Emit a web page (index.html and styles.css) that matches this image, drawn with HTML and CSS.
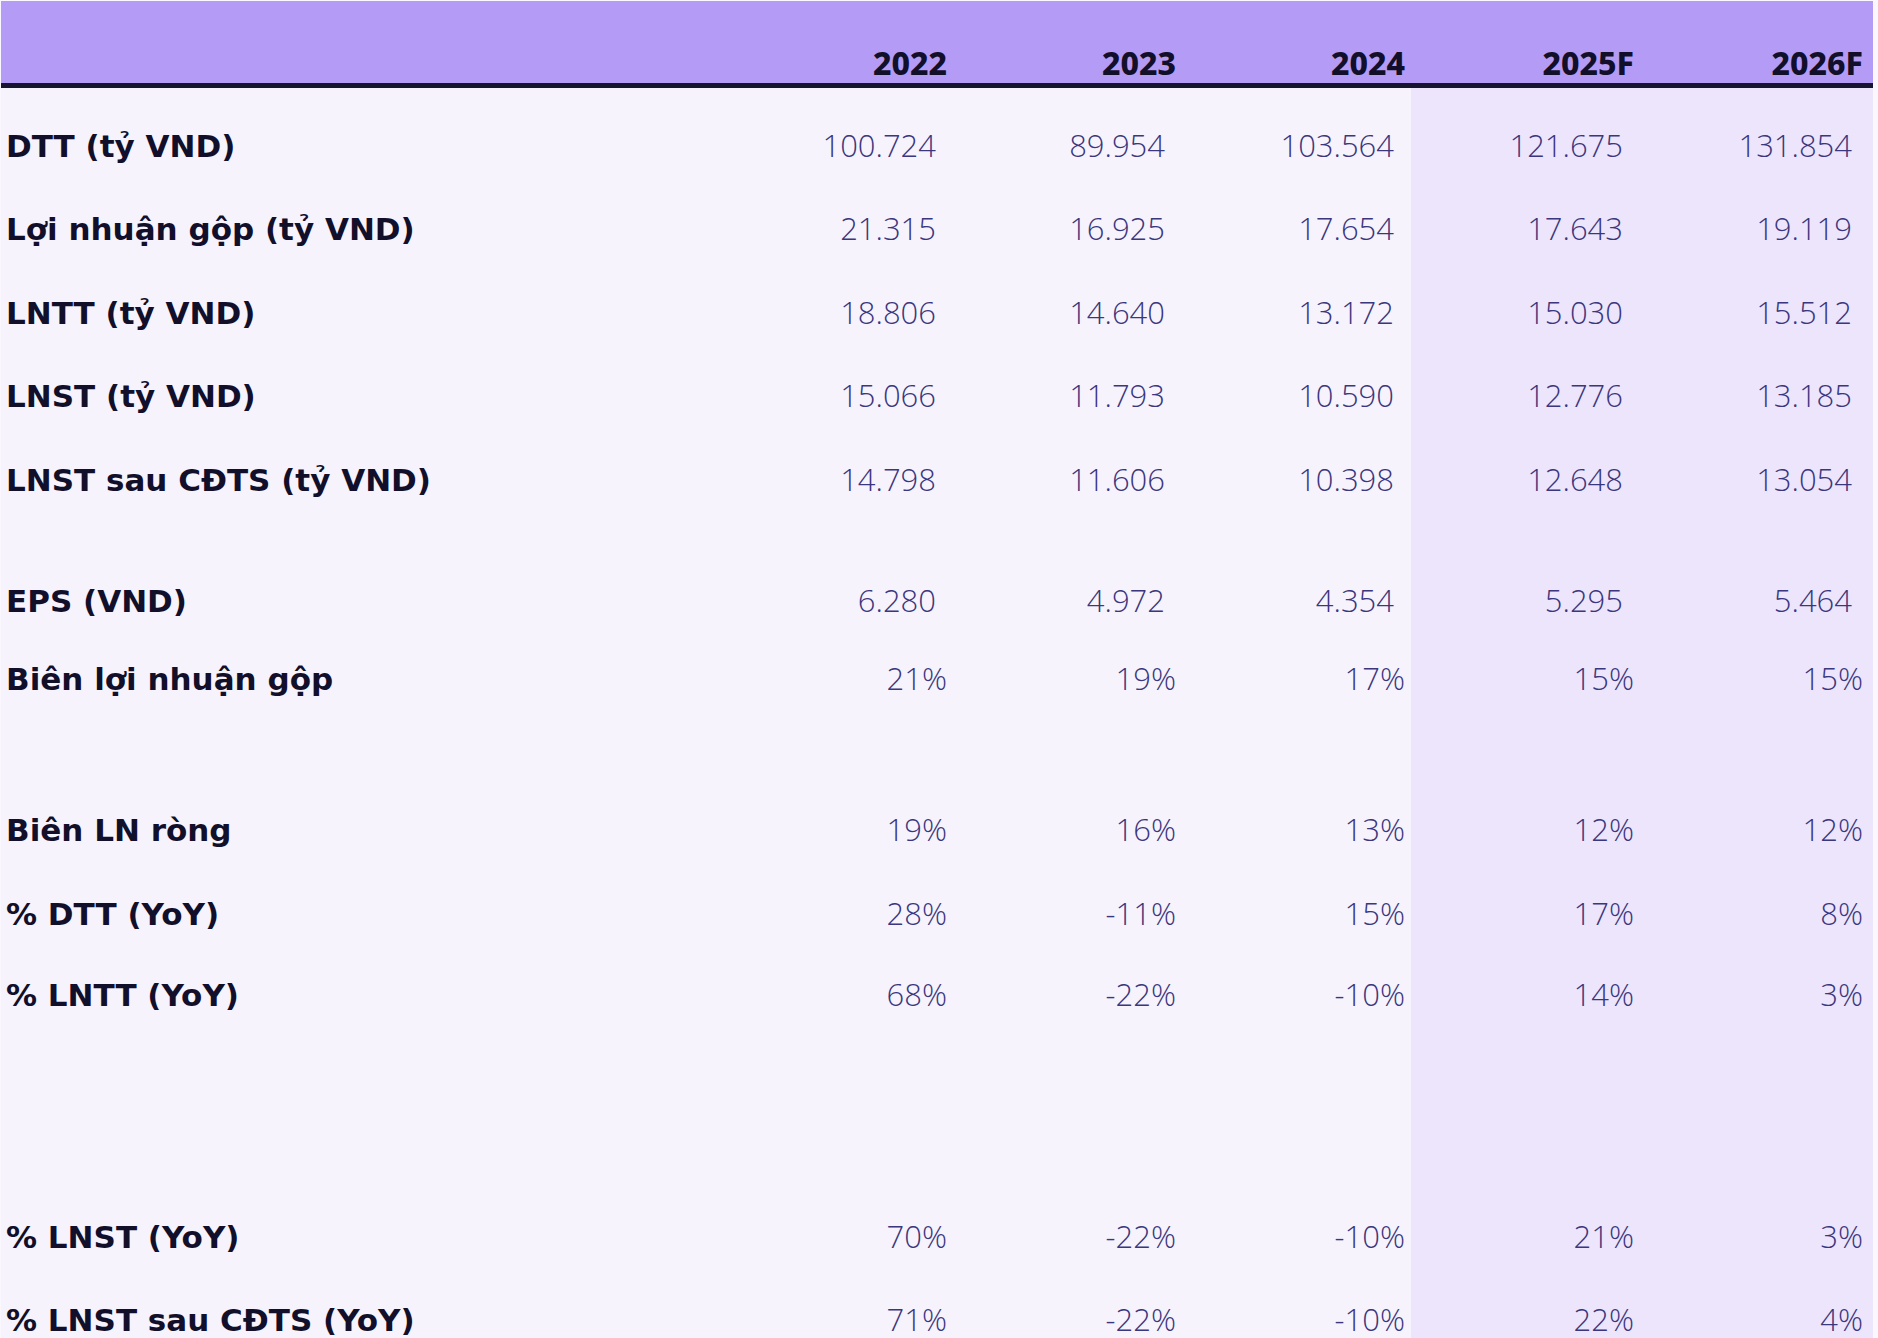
FILE: index.html
```html
<!DOCTYPE html>
<html lang="vi">
<head>
<meta charset="utf-8">
<title>Kết quả kinh doanh</title>
<link rel="stylesheet" href="styles.css">
</head>
<body>
<div class="sheet">
  <div class="head">
    <div class="label"></div>
    <div class="yr">2022</div>
    <div class="yr">2023</div>
    <div class="yr">2024</div>
    <div class="yr">2025F</div>
    <div class="yr">2026F</div>
  </div>
  <div class="body">
    <div class="row h83">
      <div class="label">DTT (tỷ VND)</div>
      <div class="num">100.724</div><div class="num">89.954</div><div class="num">103.564</div><div class="num">121.675</div><div class="num">131.854</div>
    </div>
    <div class="row h83">
      <div class="label">Lợi nhuận gộp (tỷ VND)</div>
      <div class="num">21.315</div><div class="num">16.925</div><div class="num">17.654</div><div class="num">17.643</div><div class="num">19.119</div>
    </div>
    <div class="row h84">
      <div class="label">LNTT (tỷ VND)</div>
      <div class="num">18.806</div><div class="num">14.640</div><div class="num">13.172</div><div class="num">15.030</div><div class="num">15.512</div>
    </div>
    <div class="row h83">
      <div class="label">LNST (tỷ VND)</div>
      <div class="num">15.066</div><div class="num">11.793</div><div class="num">10.590</div><div class="num">12.776</div><div class="num">13.185</div>
    </div>
    <div class="row h84">
      <div class="label">LNST sau CĐTS (tỷ VND)</div>
      <div class="num">14.798</div><div class="num">11.606</div><div class="num">10.398</div><div class="num">12.648</div><div class="num">13.054</div>
    </div>
    <div class="row h121">
      <div class="label">EPS (VND)</div>
      <div class="num">6.280</div><div class="num">4.972</div><div class="num">4.354</div><div class="num">5.295</div><div class="num">5.464</div>
    </div>
    <div class="row h78">
      <div class="label">Biên lợi nhuận gộp</div>
      <div class="pct">21%</div><div class="pct">19%</div><div class="pct">17%</div><div class="pct">15%</div><div class="pct">15%</div>
    </div>
    <div class="row h151">
      <div class="label">Biên LN ròng</div>
      <div class="pct">19%</div><div class="pct">16%</div><div class="pct">13%</div><div class="pct">12%</div><div class="pct">12%</div>
    </div>
    <div class="row h84">
      <div class="label">% DTT (YoY)</div>
      <div class="pct">28%</div><div class="pct">-11%</div><div class="pct">15%</div><div class="pct">17%</div><div class="pct">8%</div>
    </div>
    <div class="row h81">
      <div class="label">% LNTT (YoY)</div>
      <div class="pct">68%</div><div class="pct">-22%</div><div class="pct">-10%</div><div class="pct">14%</div><div class="pct">3%</div>
    </div>
    <div class="row h242">
      <div class="label">% LNST (YoY)</div>
      <div class="pct">70%</div><div class="pct">-22%</div><div class="pct">-10%</div><div class="pct">21%</div><div class="pct">3%</div>
    </div>
    <div class="row h83">
      <div class="label">% LNST sau CĐTS (YoY)</div>
      <div class="pct">71%</div><div class="pct">-22%</div><div class="pct">-10%</div><div class="pct">22%</div><div class="pct">4%</div>
    </div>
  </div>
</div>
</body>
</html>
```

FILE: styles.css
```css
html, body {
  margin: 0;
  padding: 0;
  background: #faf8fe;
  overflow: hidden;
}

.sheet {
  width: 1872px;
  padding: 1px 0 0 1px;
}

.head,
.row {
  display: grid;
  grid-template-columns: 723px repeat(5, 229px) 3px;
  align-items: end;
}

.head {
  height: 82px;
  background: #b49cf6;
  border-bottom: 5px solid #16142f;
}

.yr {
  font-family: "Noto Sans", "DejaVu Sans", sans-serif;
  font-weight: 800;
  font-size: 32px;
  line-height: 40px;
  color: #120f2a;
  text-align: right;
  padding-right: 6px;
}

.body {
  background: linear-gradient(to right, #f6f3fd 1410px, #ede5fc 1410px);
}

.row {
  box-sizing: border-box;
  padding-bottom: 5px;
}

.h78 { height: 78px; }
.h81 { height: 81px; }
.h83 { height: 83px; }
.h84 { height: 84px; }
.h121 { height: 121px; }
.h151 { height: 151px; }
.h242 { height: 242px; }

.label {
  font-family: "DejaVu Sans", "Noto Sans", sans-serif;
  font-weight: 700;
  font-size: 31px;
  line-height: 40px;
  color: #120f2a;
  padding-left: 5px;
  white-space: nowrap;
}

.num,
.pct {
  font-family: "Open Sans", "Noto Sans", sans-serif;
  font-weight: 350;
  font-size: 31px;
  line-height: 40px;
  color: #3b377e;
  text-align: right;
  white-space: nowrap;
  padding-bottom: 1px;
}

.num { padding-right: 17px; }
.pct { padding-right: 6px; }
```
